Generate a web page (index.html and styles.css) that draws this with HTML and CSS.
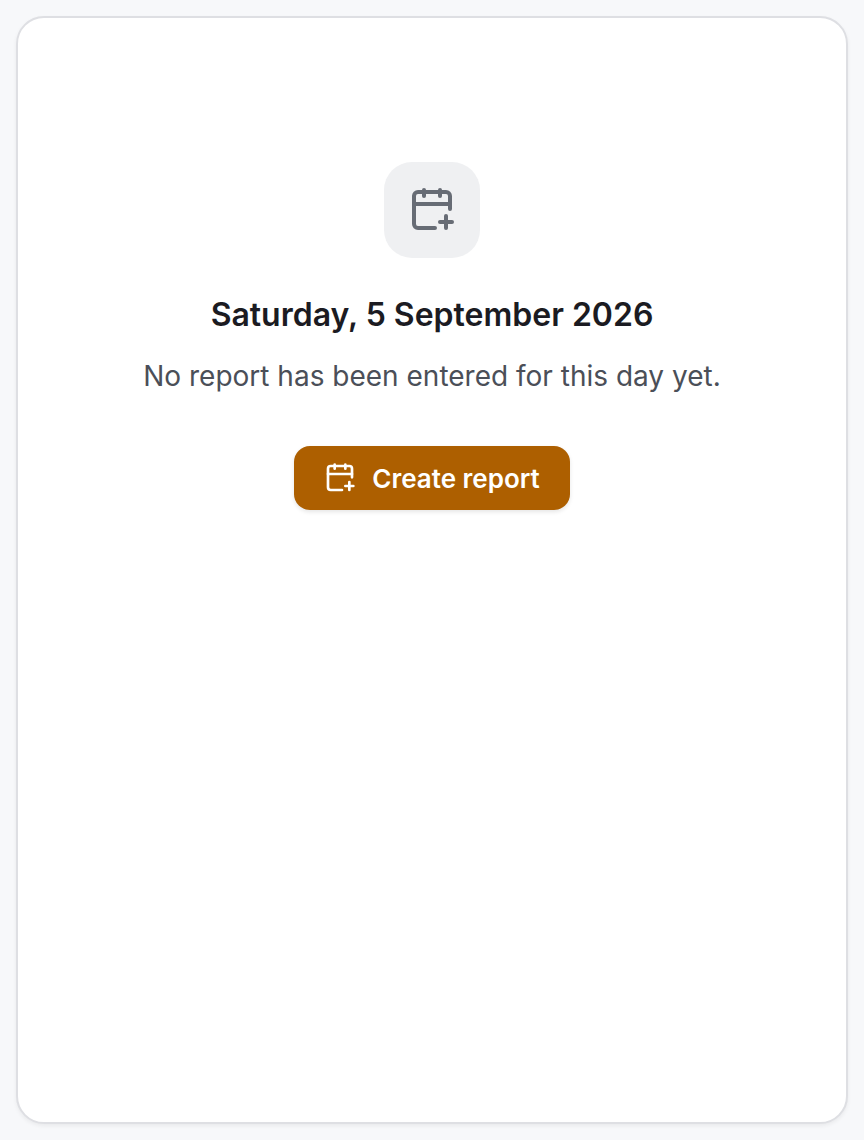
FILE: index.html
```html
<!DOCTYPE html>
<html lang="en">
<head>
    <meta charset="utf-8">
    <meta name="viewport" content="width=device-width, initial-scale=1">
    <title>Daily report</title>
    <link rel="stylesheet" href="styles.css">
</head>
<body>
    <main class="card">
        <div class="icon-tile">
            <svg class="icon icon-large" viewBox="0 0 24 24" aria-hidden="true">
                <path d="M16 18h6"/>
                <path d="M16 2v3"/>
                <path d="M19 15v6"/>
                <path d="M21 11.500V5a2 2 0 0 0-2-2H5a2 2 0 0 0-2 2v14a2 2 0 0 0 2 2h8.500"/>
                <path d="M3 9h18"/>
                <path d="M8 2v3"/>
            </svg>
        </div>
        <h1 class="title">Saturday, 5 September 2026</h1>
        <p class="message">No report has been entered for this day yet.</p>
        <button class="create" type="button">
            <svg class="icon icon-small" viewBox="0 0 24 24" aria-hidden="true">
                <path d="M16 18h6"/>
                <path d="M16 2v3"/>
                <path d="M19 15v6"/>
                <path d="M21 11.500V5a2 2 0 0 0-2-2H5a2 2 0 0 0-2 2v14a2 2 0 0 0 2 2h8.500"/>
                <path d="M3 9h18"/>
                <path d="M8 2v3"/>
            </svg>
            Create report
        </button>
    </main>
</body>
</html>
```

FILE: styles.css
```css
* {
    box-sizing: border-box;
}

body {
    margin: 0;
    min-height: 100vh;
    padding: 16px;
    display: flex;
    background: #f7f8fa;
    font-family: Inter, "Liberation Sans", sans-serif;
}

.card {
    flex: 1;
    display: flex;
    flex-direction: column;
    align-items: center;
    padding: 144px 32px;
    background: #fff;
    border: 2px solid #dedfe3;
    border-radius: 28px;
    box-shadow: 0 2px 4px rgba(0, 0, 0, 0.06);
    text-align: center;
}

.icon-tile {
    display: flex;
    align-items: center;
    justify-content: center;
    width: 96px;
    height: 96px;
    margin-bottom: 32px;
    border-radius: 28px;
    background: #eff0f2;
    color: #676c75;
}

.icon {
    fill: none;
    stroke: currentColor;
    stroke-width: 2;
    stroke-linecap: round;
    stroke-linejoin: round;
}

.icon-large {
    width: 48px;
    height: 48px;
}

.icon-small {
    width: 32px;
    height: 32px;
}

.title {
    margin: 0 0 16px;
    color: #1b1b22;
    font-size: 32px;
    font-weight: 600;
    line-height: 50px;
}

.message {
    margin: 0 0 50px;
    color: #4b4f58;
    font-size: 28px;
    line-height: 40px;
}

.create {
    display: flex;
    align-items: center;
    gap: 16px;
    height: 64px;
    padding: 0 30px;
    border: 0;
    border-radius: 16px;
    background: #ad5f00;
    color: #fff;
    box-shadow: 0 2px 4px rgba(0, 0, 0, 0.1);
    font: inherit;
    font-size: 26px;
    font-weight: 600;
    cursor: pointer;
}
```
